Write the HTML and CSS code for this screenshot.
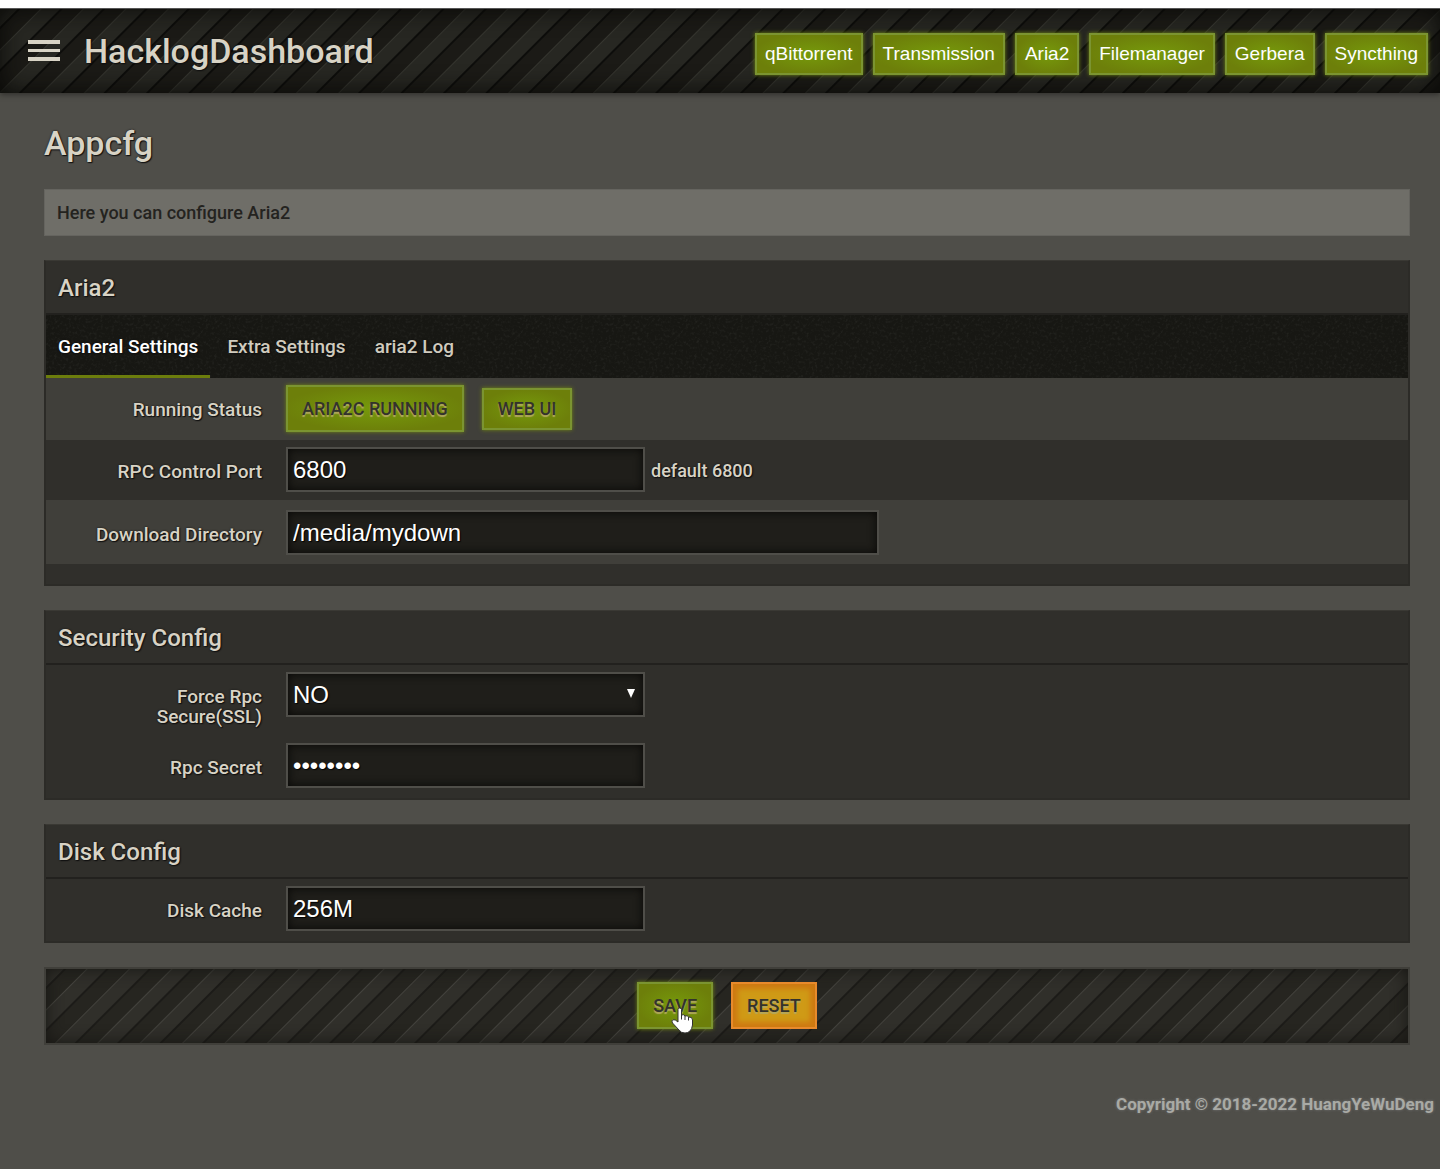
FILE: index.html
```html
<!DOCTYPE html>
<html lang="en">
<head>
<meta charset="utf-8">
<meta name="viewport" content="width=device-width, initial-scale=1">
<title>HacklogDashboard</title>
<link rel="stylesheet" href="styles.css">
</head>
<body>
<header class="topbar">
  <button class="menu" type="button" aria-label="Menu"><svg width="32" height="22" viewBox="0 0 32 22" aria-hidden="true"><path d="M0 0h32v4H0zM0 9h32v3H0zM0 17h32v4H0z" fill="currentColor"/></svg></button>
  <a class="brand" href="#">HacklogDashboard</a>
  <nav class="links">
    <a class="glow link" href="#">qBittorrent</a>
    <a class="glow link" href="#">Transmission</a>
    <a class="glow link" href="#">Aria2</a>
    <a class="glow link" href="#">Filemanager</a>
    <a class="glow link" href="#">Gerbera</a>
    <a class="glow link" href="#">Syncthing</a>
  </nav>
</header>
<main class="content">
  <h1 class="title">Appcfg</h1>
  <p class="notice">Here you can configure Aria2</p>
  <form class="form">
    <section class="panel">
      <h2 class="panel-title">Aria2</h2>
      <nav class="tabs">
        <a class="tab active" href="#">General Settings</a>
        <a class="tab" href="#">Extra Settings</a>
        <a class="tab" href="#">aria2 Log</a>
      </nav>
      <div class="row striped">
        <span class="label">Running Status</span>
        <div class="field buttons">
          <button class="glow button" type="button">ARIA2C RUNNING</button>
          <button class="glow button small" type="button">WEB UI</button>
        </div>
      </div>
      <div class="row">
        <label class="label" for="port">RPC Control Port</label>
        <div class="field"><input class="control" id="port" type="text" value="6800"><span class="hint">default 6800</span></div>
      </div>
      <div class="row striped roomy">
        <label class="label" for="dir">Download Directory</label>
        <div class="field"><input class="control wide" id="dir" type="text" value="/media/mydown"></div>
      </div>
      <div class="panel-end"></div>
    </section>
    <section class="panel">
      <h2 class="panel-title">Security Config</h2>
      <div class="row">
        <label class="label" for="ssl">Force Rpc Secure(SSL)</label>
        <div class="field"><span class="select"><select class="control" id="ssl"><option>NO</option><option>YES</option></select><svg class="caret" width="8" height="9" viewBox="0 0 8 9" aria-hidden="true"><path d="M0 0h8L4 9z" fill="#fff"/></svg></span></div>
      </div>
      <div class="row">
        <label class="label" for="secret">Rpc Secret</label>
        <div class="field"><input class="control" id="secret" type="password" value="password"></div>
      </div>
    </section>
    <section class="panel">
      <h2 class="panel-title">Disk Config</h2>
      <div class="row">
        <label class="label" for="cache">Disk Cache</label>
        <div class="field"><input class="control" id="cache" type="text" value="256M"></div>
      </div>
    </section>
    <div class="actions">
      <button class="glow button" type="button">SAVE<svg class="pointer" width="22" height="27" viewBox="0 0 22 27" aria-hidden="true"><path d="M7 2.500Q7 1 8.500 1T10.500 2.500V8Q13 7 14 9Q16.500 8 17.500 10Q21.500 9.500 21.500 13V18Q21 22 19 24Q17 26 14 26Q10 26 8 23L1.500 16Q0 13.500 2 12.800Q4 12 7 15Z" fill="#fff" stroke="#333" stroke-width="1"/><path d="M10.500 8v4.500M14 9v4M17.500 10v3.500" stroke="#333" stroke-width="1"/></svg></button>
      <button class="button reset" type="reset">RESET</button>
    </div>
  </form>
</main>
<footer class="footer">Copyright © 2018-2022 HuangYeWuDeng</footer>
</body>
</html>
```

FILE: styles.css
```css
* { box-sizing: border-box; }

html { background: #4f4e49; }

body {
  margin: 0;
  border-top: 8px solid #fff;
  background: #4f4e49;
  color: #d8d3c5;
  font: 500 19px/20px Roboto, "Liberation Sans", sans-serif;
  text-shadow: 0 0 2px #111, 1px 1px 1px #111;
}

.topbar {
  display: flex;
  align-items: center;
  min-height: 85px;
  padding: 0 12px 0 28px;
  border-top: 1px solid #555;
  background: repeating-linear-gradient(135deg, #272722 0 12px, #0d0d0b 13px 14px, #1b1a16 15px 28px, #35352f 29px, #272722 30px);
  box-shadow: inset 0 0 24px #080806, 0 2px 5px #33322f;
}

.menu {
  display: flex;
  padding: 0;
  border: 0;
  background: none;
  color: #d8d3c5;
}

.brand {
  margin-left: 24px;
  color: #d8d3c5;
  font-size: 34px;
  line-height: 40px;
  text-decoration: none;
}

.links {
  display: flex;
  gap: 10px;
  margin-left: auto;
  padding-top: 6px;
}

.glow {
  border: 2px solid #7b9431;
  background: radial-gradient(ellipse at center, #769a0b, #6d7f0a 75%);
  box-shadow: 0 0 4px #71880f;
}

.link {
  padding: 8px;
  color: #fff;
  font: 400 19px/22px "Liberation Sans", sans-serif;
  text-decoration: none;
  text-shadow: none;
}

.content { padding: 30px 30px 0 44px; }

.title {
  margin: 0 0 26px;
  font-size: 34px;
  font-weight: 500;
  line-height: 40px;
}

.notice {
  margin: 0 0 24px;
  padding: 13px 12px 12px;
  border: 1px solid #65645f;
  background: #6f6e68;
  color: #24231f;
  font-size: 18px;
  font-weight: 500;
  text-shadow: none;
}

.form {
  display: flex;
  flex-direction: column;
  gap: 24px;
}

.panel {
  border: 2px solid #2c2b27;
  border-top: 1px solid #3a3934;
  background: #302f2b;
}

.panel-title {
  margin: 0;
  padding: 12px 12px 10px;
  border-bottom: 2px solid #22211e;
  font-size: 24px;
  font-weight: 500;
  line-height: 30px;
}

.tabs {
  display: flex;
  gap: 5px;
  background: #171713 url("data:image/svg+xml,%3Csvg xmlns='http://www.w3.org/2000/svg' width='160' height='63'%3E%3Cfilter id='n'%3E%3CfeTurbulence type='fractalNoise' baseFrequency='.35' numOctaves='2' stitchTiles='stitch'/%3E%3CfeColorMatrix values='0 0 0 0 .24 0 0 0 0 .25 0 0 0 0 .23 .7 0 0 0 -.36'/%3E%3C/filter%3E%3Crect width='160' height='63' filter='url(%23n)' opacity='.4'/%3E%3C/svg%3E");
}

.tab {
  padding: 22px 12px 18px;
  border-bottom: 3px solid transparent;
  color: #d0cbbe;
  text-decoration: none;
}

.tab.active {
  border-color: #6c7d0c;
  color: #fff;
}

.row {
  display: grid;
  grid-template-columns: 216px 1fr;
  gap: 24px;
  padding: 7px 0 8px;
}

.row:last-child { padding-bottom: 10px; }

.striped { background: #403f3a; }

.roomy { padding: 10px 0 9px; }

.label {
  padding: 15px 0 1px 36px;
  text-align: right;
}

.field {
  display: flex;
  align-items: center;
  align-self: start;
  gap: 6px;
}

.field.buttons { gap: 18px; }

.hint {
  padding-top: 2px;
  font-size: 18px;
}

.control {
  width: 359px;
  height: 45px;
  padding: 0 5px;
  border: 2px solid #4f4e49;
  border-radius: 0;
  background: #1f1e1a;
  box-shadow: inset 0 0 10px #080806;
  color: #fff;
  font: 400 24px/28px "Liberation Sans", sans-serif;
  text-shadow: 1px 1px 1px #000;
  appearance: none;
}

.wide { width: 593px; }

.select {
  display: flex;
  position: relative;
}

.caret {
  position: absolute;
  top: 17px;
  right: 10px;
  pointer-events: none;
}

.panel-end { height: 20px; }

.button {
  position: relative;
  height: 47px;
  padding: 0 14px;
  color: #33322d;
  font: 500 18px/20px Roboto, "Liberation Sans", sans-serif;
  text-shadow: 0 2px 1px #b3a860;
}

.button.small { height: 42px; }

.reset {
  border: 2px solid #e88a2c;
  background: #cf9a16;
  box-shadow: inset 0 0 5px 5px #cf7a12;
}

.pointer {
  position: absolute;
  top: 23px;
  right: 18px;
}

.actions {
  display: flex;
  align-items: center;
  justify-content: center;
  gap: 18px;
  padding: 13px 0 14px;
  border: 2px solid #403f3a;
  background: repeating-linear-gradient(135deg, #302f2a 0 12px, #1c1b18 13px 14px, #262520 15px 28px, #43423d 29px, #302f2a 30px);
  box-shadow: inset 0 0 16px #171613;
}

.footer {
  padding: 49px 6px;
  color: #a9aaa5;
  font-size: 17px;
  font-weight: 700;
  text-align: right;
  text-shadow: 0 0 3px #777;
}
```
